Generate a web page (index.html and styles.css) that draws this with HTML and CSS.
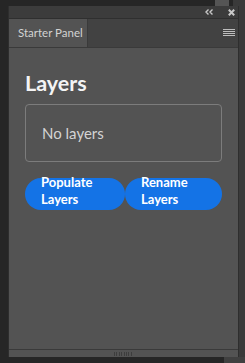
FILE: index.html
```html
<!DOCTYPE html>
<html lang="en">
<head>
  <meta charset="UTF-8" />
  <meta name="viewport" content="width=device-width, initial-scale=1.0" />
  <title>Starter Panel</title>
  <link rel="stylesheet" href="styles.css">
</head>
<body>
  <div class="screen">
    <div class="topline">
      <div class="topblock"></div>
      <div class="topgap"></div>
      <div class="topside"></div>
    </div>
    <div class="mid">
      <div class="gutter"></div>
      <div class="panel">
        <div class="titlebar">
          <svg class="collapse" width="9" height="6" viewBox="0 0 9 6">
            <path d="M3.5 0.5 L1 3 L3.5 5.5 M7.5 0.5 L5 3 L7.5 5.5" fill="none" stroke="#c9c9c9" stroke-width="1.4"/>
          </svg>
          <svg class="close" width="7" height="7" viewBox="0 0 7 7">
            <path d="M0.8 0.8 L6.2 6.2 M6.2 0.8 L0.8 6.2" fill="none" stroke="#c9c9c9" stroke-width="2"/>
          </svg>
        </div>
        <div class="tabs">
          <div class="tab">Starter Panel</div>
          <svg class="menu" width="12" height="8" viewBox="0 0 12 8">
            <path d="M0 0.5 H12 M0 2.5 H12 M0 4.5 H12 M0 6.5 H12" stroke="#bdbdbd" stroke-width="1"/>
          </svg>
        </div>
        <div class="content">
          <h1>Layers</h1>
          <div class="layerbox">No layers</div>
          <div class="buttons">
            <div class="btn btn-left"><span>Populate<br>Layers</span></div>
            <div class="btn btn-right"><span>Rename<br>Layers</span></div>
          </div>
        </div>
        <div class="footer">
          <div class="grip"></div>
        </div>
      </div>
      <div class="sidestrip"></div>
    </div>
    <div class="bottomline">
      <div class="bottomgap"></div>
      <div class="bottomside"></div>
    </div>
  </div>
</body>
</html>
```

FILE: styles.css
```css
* {
  margin: 0;
  padding: 0;
  box-sizing: border-box;
}
body {
  background: #262626;
  font-family: Lato, 'Open Sans', sans-serif;
  overflow: hidden;
}
.screen {
  width: 245px;
  height: 363px;
  display: flex;
  flex-direction: column;
}
.topline {
  height: 6px;
  display: flex;
  padding-left: 215px;
}
.topblock {
  width: 14px;
  background: #555;
}
.topgap {
  width: 4px;
}
.topside {
  flex: 1;
  background: #3a3a3a;
}
.mid {
  flex: 1;
  display: flex;
}
.gutter {
  width: 8px;
}
.sidestrip {
  width: 6px;
  background: #3a3a3a;
}
.panel {
  width: 231px;
  display: flex;
  flex-direction: column;
  background: #535353;
  border-left: 1px solid #2e2e2e;
  border-right: 1px solid #2e2e2e;
}
.titlebar {
  height: 13px;
  background: #3c3c3c;
  border-bottom: 1px solid #2f2f2f;
  display: flex;
  align-items: center;
  justify-content: flex-end;
  gap: 14px;
  padding-right: 3px;
}
.tabs {
  height: 29px;
  background: #424242;
  border-bottom: 1px solid #3a3a3a;
  display: flex;
  align-items: center;
  justify-content: space-between;
  padding-right: 3px;
}
.tab {
  height: 100%;
  width: 79px;
  background: #535353;
  border-right: 1px solid #3a3a3a;
  color: #d2d2d2;
  font-size: 11.5px;
  line-height: 28px;
  padding-left: 9px;
}
.content {
  flex: 1;
  padding: 23px 16px 0 16px;
}
h1 {
  color: #f4f4f4;
  font-size: 21.5px;
  font-weight: 700;
  line-height: 24px;
}
.layerbox {
  margin-top: 9px;
  height: 58px;
  border: 1px solid #7c7c7c;
  border-radius: 4px;
  color: #d4d4d4;
  font-size: 15px;
  line-height: 56px;
  padding-left: 16px;
}
.buttons {
  margin-top: 16px;
  display: flex;
}
.btn {
  height: 32px;
  background: #1473e6;
  border-radius: 16px;
  color: #fff;
  font-size: 13px;
  font-weight: 700;
  padding-left: 16px;
}
.btn span {
  display: block;
  line-height: 17.5px;
  margin-top: -4.5px;
}
.btn-left {
  width: 100px;
}
.btn-right {
  width: 97px;
}
.footer {
  height: 8px;
  border-top: 1px solid #3a3a3a;
  display: flex;
  justify-content: center;
  align-items: center;
}
.grip {
  width: 19px;
  height: 4px;
  background: repeating-linear-gradient(90deg, #3d3d3d 0 1px, transparent 1px 2.4px);
}
.bottomline {
  height: 6px;
  display: flex;
}
.bottomgap {
  width: 224px;
}
.bottomside {
  flex: 1;
  background: #404040;
}
```
